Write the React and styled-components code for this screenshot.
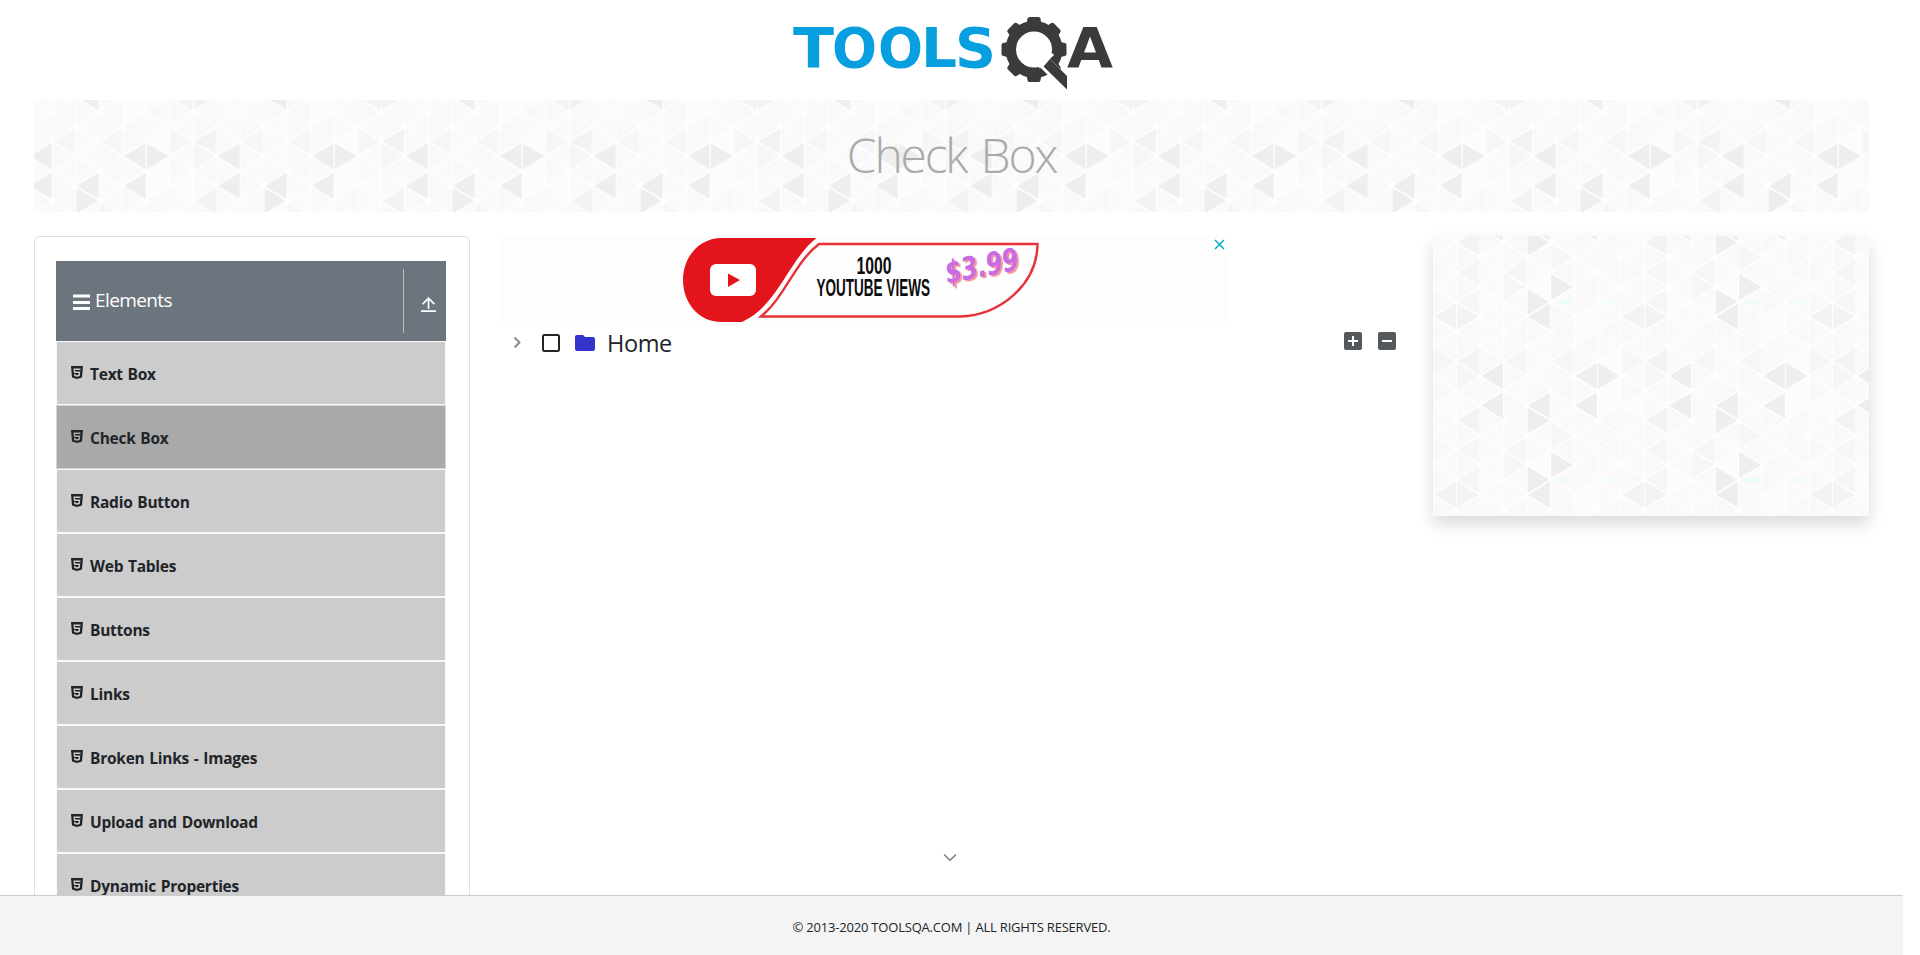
import React from "react";
import styled, { createGlobalStyle } from "styled-components";

const GlobalStyle = createGlobalStyle`
  *, *::before, *::after { box-sizing: border-box; }
  body {
    margin: 0;
    background: #fff;
    color: #212529;
    font-family: "Open Sans", "Noto Sans", sans-serif;
    font-size: 16px;
    overflow: hidden;
  }
`;

const Page = styled.div`
  height: 955px;
  width: 1903px;
  display: flex;
  flex-direction: column;
  overflow: hidden;
`;

const Content = styled.div`
  flex: 1;
  min-height: 0;
  overflow: hidden;
  padding: 0 34px;
`;

const Header = styled.header`
  height: 100px;
  display: flex;
  justify-content: center;
  padding: 10px 0 0 3px;
`;

const Banner = styled.div`
  position: relative;
  height: 112px;
  display: flex;
  justify-content: center;
  padding-top: 21px;
`;

const Title = styled.h1`
  position: relative;
  margin: 0;
  color: #aaa;
  font-size: 48px;
  font-weight: 300;
  line-height: 68px;
  white-space: nowrap;
  letter-spacing: -2.2px;
  word-spacing: 4px;
`;

const Texture = styled.svg`
  position: absolute;
  inset: 0;
  width: 100%;
  height: 100%;
  display: block;
`;

const Columns = styled.div`
  display: grid;
  grid-template-columns: 436px 903px 436px;
  column-gap: 30px;
  align-items: start;
  margin-top: 24px;
`;

const Sidebar = styled.aside`
  border: 1px solid #dfdfdf;
  border-radius: 5px;
  padding: 24px 23px 24px 21px;
`;

const GroupHeader = styled.div`
  height: 80px;
  background: #6c757d;
  color: #fff;
  display: flex;
  align-items: center;
  padding-left: 17px;
`;

const MenuIcon = styled.svg`
  margin-top: 2px;
`;

const GroupName = styled.span`
  flex: 1;
  padding: 0 0 2px 5px;
  font-size: 19px;
  line-height: 24px;
  letter-spacing: -0.6px;
`;

const Collapse = styled.div`
  height: 64px;
  width: 43px;
  border-left: 1px solid #b9bdc1;
  padding: 27px 0 0 17px;
`;

const Item = styled.div`
  height: 64px;
  border: 1px solid ${(p) => (p.$active ? "#cfd4db" : "#f8f9fa")};
  background: ${(p) => (p.$active ? "#a9a9a9" : "#ccc")};
  display: flex;
  align-items: flex-start;
  padding: 20px 0 0 14px;
  font-size: 15.5px;
  font-weight: 700;
  line-height: 24px;
  letter-spacing: -0.25px;
  word-spacing: 1px;
  svg { margin: 4px 7px 0 0; }
`;

const Main = styled.main`
  display: flex;
  flex-direction: column;
`;

const Ad = styled.div`
  display: flex;
  justify-content: space-between;
  width: 729px;
  height: 90px;
  background: #fdfdfd;
  padding-left: 180px;
`;

const AdClose = styled.svg`
  margin: 3px 4px 0 0;
`;

const Tree = styled.div`
  display: flex;
  align-items: center;
  height: 34px;
  padding: 0 7px 0 12px;
`;

const CheckIcon = styled.svg`
  margin-left: 19px;
`;

const FolderIcon = styled.svg`
  margin-left: 14px;
`;

const NodeLabel = styled.span`
  flex: 1;
  padding-left: 12px;
  font-size: 23.5px;
  line-height: 34px;
  letter-spacing: -0.4px;
`;

const Action = styled.svg`
  margin: -4px 0 0 16px;
`;

const SideAd = styled.div`
  position: relative;
  height: 280px;
  box-shadow: 0 8px 16px rgba(0, 0, 0, 0.15);
`;

const Pull = styled.div`
  position: absolute;
  left: 943px;
  top: 853px;
  line-height: 0;
`;

const Footer = styled.footer`
  flex: none;
  height: 60px;
  width: 1903px;
  background: #f4f4f4;
  border-top: 1px solid #ccc;
  display: flex;
  justify-content: center;
  padding-top: 21px;
  font-size: 13px;
  line-height: 20px;
  letter-spacing: -0.2px;
`;

const SHADES = ["#fcfcfc", "#fafafa", "#f9f9f9", "#f6f6f6", "#f3f3f3", "#eeeeee"];
const ROWS = [
  "14225122", "12121312", "23131212", "12130521", "23015121", "44115201",
  "22122202", "12121221", "34231320", "13521255", "22112210", "01525150",
];
const COL = 23.5;
const STEP = 178 / 12;

const triangles = [];
for (let j = -1; j <= 12; j++) {
  for (let c = 0; c < 8; c++) {
    const shade = SHADES[ROWS[(j + 12) % 12][c]];
    const y = 6.5 + STEP * j;
    const left = c * COL + 1.2;
    const right = (c + 1) * COL - 1.2;
    const pointsLeft = (c + j + 12) % 2 === 1;
    const apex = pointsLeft ? left + 0.8 : right - 0.8;
    const edge = pointsLeft ? right : left;
    triangles.push(
      <polygon
        key={`${c}:${j}`}
        points={`${apex},${y} ${edge},${y - 12.2} ${edge},${y + 12.2}`}
        fill={shade}
        stroke={shade}
        strokeLinejoin="round"
      />
    );
  }
}

function Triangles({ id, x = 0, y = 0 }) {
  return (
    <Texture aria-hidden="true">
      <defs>
        <pattern id={id} width="188" height="178" patternUnits="userSpaceOnUse" x={x} y={y}>
          <rect width="188" height="178" fill="#fefefe" />
          {triangles}
          <ellipse cx="133" cy="66" rx="8" ry="1.5" fill="#e6fdfd" />
          <ellipse cx="178" cy="66" rx="10" ry="1.5" fill="#effdfd" />
        </pattern>
      </defs>
      <rect width="100%" height="100%" fill={`url(#${id})`} />
    </Texture>
  );
}

const TEETH = [0, 45, 90, 135, 180, 225, 270, 315];
const WORDMARK = [
  ["T", 793, 41], ["O", 832, 45], ["O", 878, 45], ["L", 921, 36], ["S", 955, 41],
];

function Logo() {
  return (
    <svg width="326" height="82" viewBox="790 10 326 82">
      <g fill="#079fdf" fontFamily="DejaVu Sans" fontWeight="700" fontSize="56">
        {WORDMARK.map(([letter, x, width]) => (
          <text key={x} x={x} y="67" textLength={width} lengthAdjust="spacingAndGlyphs">{letter}</text>
        ))}
      </g>
      <g fill="#3b3b3b">
        {TEETH.map((a) => (
          <path key={a} transform={`rotate(${a} 1034 49.5)`} d="M1026 26 L1027.6 18.5 Q1028 17 1029.5 17 H1038.5 Q1040 17 1040.4 18.5 L1042 26 Z" />
        ))}
      </g>
      <circle cx="1034" cy="49.5" r="23.25" fill="none" stroke="#3b3b3b" strokeWidth="10.5" />
      <path d="M1039 67.5 L1053 54" stroke="#fff" strokeWidth="3" />
      <path d="M1044 62 L1067 85" stroke="#fff" strokeWidth="13" />
      <path d="M1043.5 66.5 L1050 59 L1067 76 V89.5 Z" fill="#3b3b3b" />
      <text x="1067" y="67" textLength="46" lengthAdjust="spacingAndGlyphs" fill="#3b3b3b"
        fontFamily="DejaVu Sans" fontWeight="700" fontSize="56">A</text>
    </svg>
  );
}

function Html5Icon() {
  return (
    <svg width="12" height="13" viewBox="0 0 12 13">
      <path fill="#212529" fillRule="evenodd" d="M0 0h12l-1 11.6L6 13l-5-1.4zM2.5 2.6l.4 4.3h4.7l-.2 1.9L6 9.3l-1.5-.5-.1-.9H3l.2 2L6 10.7l2.8-.8.4-4.5H4.1L4 4h5.4l.1-1.4z" />
    </svg>
  );
}

function Promo() {
  return (
    <svg width="370" height="90" viewBox="680 236 370 90">
      <path d="M722 238 H816.5 C795 255 784 285 764 306 Q756 315 742 322 H722 C697 322 683 301 683 280 C683 258 698 238 722 238 Z" fill="#e3141b" />
      <path d="M819 244 H1037.5 C1037 285 1000 315 960 316.5 H761 C785 297 795 262 819 244 Z" fill="#fefefe" stroke="#e8323a" strokeWidth="2.4" />
      <rect x="710" y="264" width="46" height="32" rx="6" fill="#fff" />
      <path d="M728 273.5 L740 280 L728 287 Z" fill="#e3141b" />
      <g fill="#0c0c0c" fontFamily="Liberation Sans" fontWeight="700" fontSize="23">
        <text x="856.5" y="274" textLength="35" lengthAdjust="spacingAndGlyphs">1000</text>
        <text x="816.5" y="295.8" textLength="113.5" lengthAdjust="spacingAndGlyphs">YOUTUBE VIEWS</text>
      </g>
      <g transform="rotate(-11 949 282)" fontFamily="DejaVu Sans" fontWeight="700" fontStyle="italic" fontSize="31">
        <text x="949" y="285" fill="#f79a9a" textLength="74" lengthAdjust="spacingAndGlyphs">$3.99</text>
        <text x="947" y="283" fill="#c86be6" textLength="74" lengthAdjust="spacingAndGlyphs">$3.99</text>
      </g>
    </svg>
  );
}

const ITEMS = [
  "Text Box", "Check Box", "Radio Button", "Web Tables", "Buttons", "Links",
  "Broken Links - Images", "Upload and Download", "Dynamic Properties",
];

export default function App() {
  return (
    <Page>
      <GlobalStyle />
      <Content>
        <Header><Logo /></Header>
        <Banner>
          <Triangles id="banner-tile" x={-52.3} y={-83.7} />
          <Title>Check Box</Title>
        </Banner>
        <Columns>
          <Sidebar>
            <GroupHeader>
              <MenuIcon width="17" height="16" viewBox="0 0 17 16">
                <path d="M0 2h17M0 8.5h17M0 14.5h17" stroke="#fff" strokeWidth="2.8" />
              </MenuIcon>
              <GroupName>Elements</GroupName>
              <Collapse>
                <svg width="15" height="17" viewBox="0 0 16 17" fill="none" stroke="#fff" strokeWidth="1.8">
                  <path d="M8 13V2M1.7 8L8 1.8 14.3 8M0 15.5h16" />
                </svg>
              </Collapse>
            </GroupHeader>
            {ITEMS.map((name) => (
              <Item key={name} $active={name === "Check Box"}>
                <Html5Icon />
                {name}
              </Item>
            ))}
          </Sidebar>
          <Main>
            <Ad>
              <Promo />
              <AdClose width="11" height="11" viewBox="0 0 11 11">
                <path d="M1 1l9 9M10 1l-9 9" stroke="#00aecd" strokeWidth="1.5" />
              </AdClose>
            </Ad>
            <Tree>
              <svg width="10" height="14" viewBox="0 0 10 14">
                <path d="M2.5 1.5L7.5 6.5l-5 5" fill="none" stroke="#8a8c8e" strokeWidth="2" />
              </svg>
              <CheckIcon width="20" height="20" viewBox="0 0 20 20">
                <rect x="2" y="2" width="16" height="16" rx="1.5" fill="none" stroke="#212529" strokeWidth="2" />
              </CheckIcon>
              <FolderIcon width="20" height="18" viewBox="0 0 20 18">
                <path d="M2 1h6l2 2h8a2 2 0 0 1 2 2v10a2 2 0 0 1-2 2H2a2 2 0 0 1-2-2V3a2 2 0 0 1 2-2z" fill="#3433cb" />
              </FolderIcon>
              <NodeLabel>Home</NodeLabel>
              <Action width="18" height="18" viewBox="0 0 18 18">
                <rect width="18" height="18" rx="2" fill="#56595c" />
                <path d="M4 9h10M9 4v10" stroke="#fff" strokeWidth="2" />
              </Action>
              <Action width="18" height="18" viewBox="0 0 18 18">
                <rect width="18" height="18" rx="2" fill="#56595c" />
                <path d="M4 9h10" stroke="#fff" strokeWidth="2" />
              </Action>
            </Tree>
          </Main>
          <SideAd><Triangles id="side-tile" /></SideAd>
        </Columns>
      </Content>
      <Pull>
        <svg width="14" height="9" viewBox="0 0 14 9">
          <path d="M1 1.5l6 5.8 6-5.8" fill="none" stroke="#777" strokeWidth="1.3" />
        </svg>
      </Pull>
      <Footer>© 2013-2020 TOOLSQA.COM | ALL RIGHTS RESERVED.</Footer>
    </Page>
  );
}
